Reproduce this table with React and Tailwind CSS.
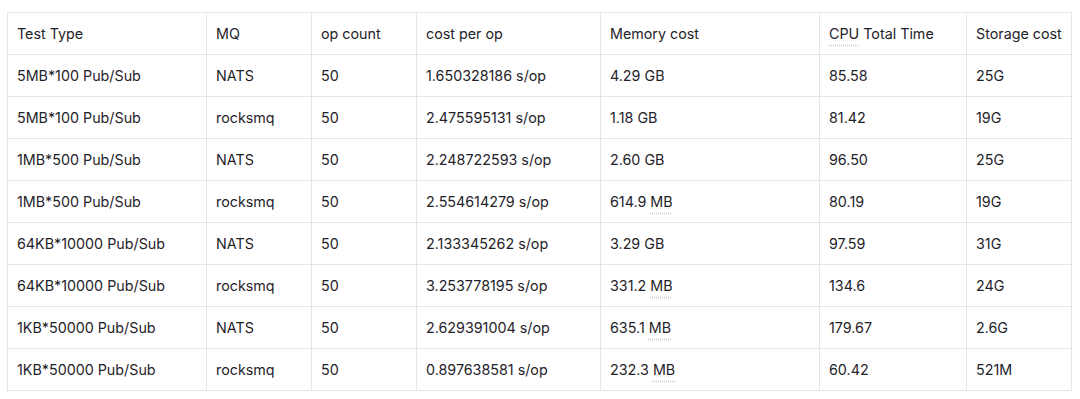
const columns = [
  { label: 'Test Type', width: 'w-[199px]' },
  { label: 'MQ', width: 'w-[105px]' },
  { label: 'op count', width: 'w-[105px]' },
  { label: 'cost per op', width: 'w-[184px]' },
  { label: 'Memory cost', width: 'w-[219px]' },
  { label: 'CPU Total Time', width: 'w-[147px]' },
  { label: 'Storage cost', width: 'w-[105px]' },
];

const rows = [
  ['5MB*100 Pub/Sub', 'NATS', '50', '1.650328186 s/op', ['4.29', 'GB'], '85.58', '25G'],
  ['5MB*100 Pub/Sub', 'rocksmq', '50', '2.475595131 s/op', ['1.18', 'GB'], '81.42', '19G'],
  ['1MB*500 Pub/Sub', 'NATS', '50', '2.248722593 s/op', ['2.60', 'GB'], '96.50', '25G'],
  ['1MB*500 Pub/Sub', 'rocksmq', '50', '2.554614279 s/op', ['614.9', 'MB', true], '80.19', '19G'],
  ['64KB*10000 Pub/Sub', 'NATS', '50', '2.133345262 s/op', ['3.29', 'GB'], '97.59', '31G'],
  ['64KB*10000 Pub/Sub', 'rocksmq', '50', '3.253778195 s/op', ['331.2', 'MB', true], '134.6', '24G'],
  ['1KB*50000 Pub/Sub', 'NATS', '50', '2.629391004 s/op', ['635.1', 'MB', true], '179.67', '2.6G'],
  ['1KB*50000 Pub/Sub', 'rocksmq', '50', '0.897638581 s/op', ['232.3', 'MB', true], '60.42', '521M'],
];

const dotted = 'underline decoration-dotted decoration-[#c4c8ce] underline-offset-[6px]';

const Cell = ({ children }) => (
  <td className="h-[42px] border border-[#e4e6ea] px-[9px] align-middle whitespace-nowrap">{children}</td>
);

export default function App() {
  return (
    <div className="w-[1080px] h-[399px] bg-white pl-[7px] pt-[12px] font-['Inter','Liberation_Sans',sans-serif] text-[14.3px] text-[#1f2329]">
      <table className="table-fixed border-collapse w-[1064px]">
        <colgroup>
          {columns.map((c) => (
            <col key={c.label} className={c.width} />
          ))}
        </colgroup>
        <thead>
          <tr>
            {columns.map((c) => (
              <th key={c.label} className="h-[42px] border border-[#e4e6ea] px-[9px] text-left font-normal whitespace-nowrap">
                {c.label === 'CPU Total Time' ? (
                  <>
                    <span className={dotted}>CPU</span> Total Time
                  </>
                ) : (
                  c.label
                )}
              </th>
            ))}
          </tr>
        </thead>
        <tbody>
          {rows.map((r, i) => (
            <tr key={i}>
              <Cell>{r[0]}</Cell>
              <Cell>{r[1]}</Cell>
              <Cell>{r[2]}</Cell>
              <Cell>{r[3]}</Cell>
              <Cell>
                {r[4][0]} {r[4][2] ? <span className={dotted}>{r[4][1]}</span> : r[4][1]}
              </Cell>
              <Cell>{r[5]}</Cell>
              <Cell>{r[6]}</Cell>
            </tr>
          ))}
        </tbody>
      </table>
    </div>
  );
}
